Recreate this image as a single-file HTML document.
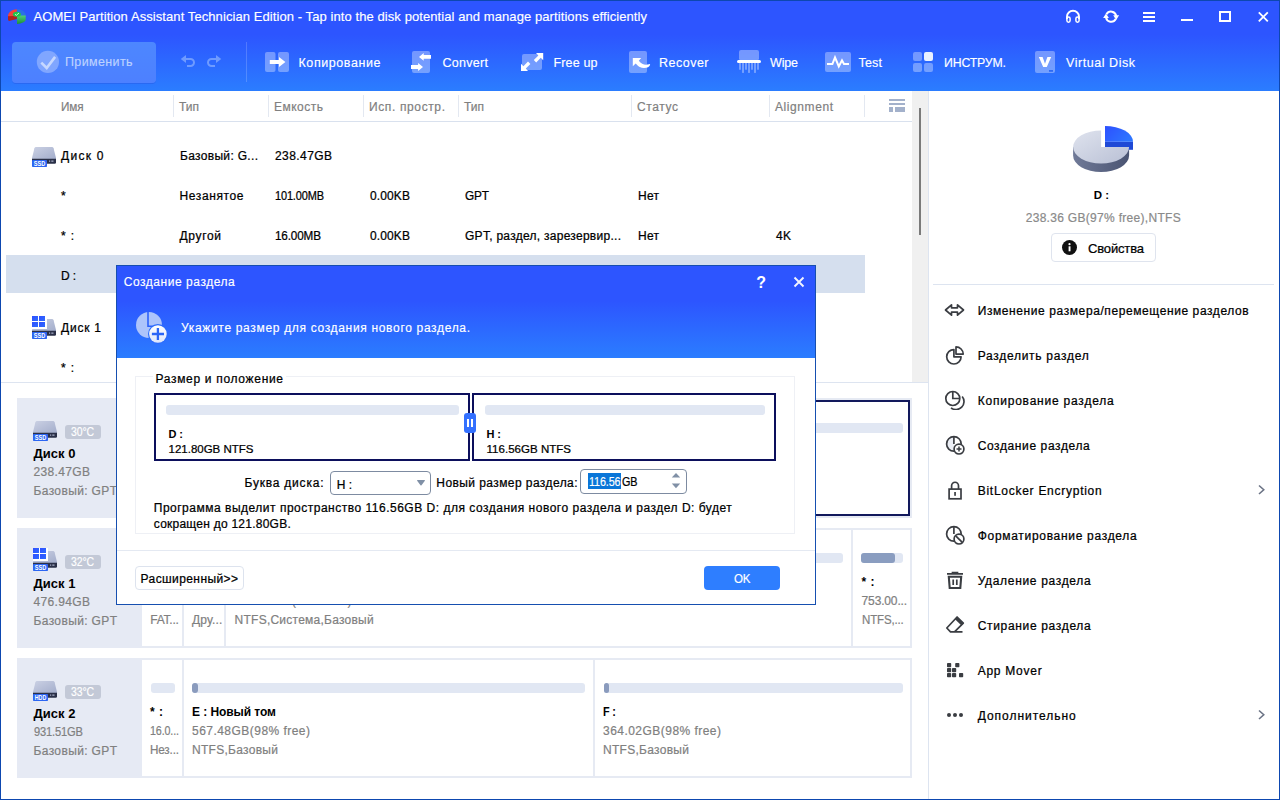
<!DOCTYPE html>
<html lang="ru"><head><meta charset="utf-8"><title>AOMEI Partition Assistant</title>
<style>
html,body{margin:0;padding:0}
body{width:1280px;height:800px;overflow:hidden;position:relative;background:#fff;font-family:"Liberation Sans",sans-serif;font-size:12px}
#app div,#app span,#app svg{position:absolute;box-sizing:border-box}
#app span{white-space:pre}
#app{position:absolute;left:0;top:0;width:1280px;height:800px;overflow:hidden}
</style></head><body><div id="app">
<div style="left:0px;top:0px;width:1280px;height:800px;background:#fff;"></div>
<div style="left:0px;top:0px;width:1280px;height:91px;background:linear-gradient(#2d55ff 0,#2d55ff 38%,#2b7dff 100%);"></div>
<svg style="left:6px;top:7px" width="22" height="19" viewBox="0 0 22 19">
<defs><linearGradient id="lg1" x1="0" y1="0" x2="0" y2="1"><stop offset="0" stop-color="#4fd07a"/><stop offset="1" stop-color="#1f8f3a"/></linearGradient></defs>
<path d="M10.800 2.200 C15.500 2 19.500 4.500 20 8.500 V10 L11 8.500 Z" fill="#2a72e4"/>
<path d="M2 8.600 L10.900 8.300 V11.900 L3 13.900 Q2 13.600 2 12.600 Z" fill="#b3231c"/>
<path d="M2 8.400 C2.500 4.700 6.500 2.500 10.800 2.200 V8.800 L2 9.300 Z" fill="#f2423c"/>
<path d="M11 8.400 L19.700 8.400 V12.600 C19.400 15.200 15.500 16.700 11 16.900 Z" fill="url(#lg1)"/>
<ellipse cx="10.900" cy="7.200" rx="4" ry="2.500" fill="#1dc64a"/>
<path d="M9 7.300 L10.400 8.300 L13 6" stroke="#d8ffe2" stroke-width="0.9" fill="none"/>
</svg>
<span style="left:33.50px;top:8.00px;font-size:13px;line-height:17px;color:#fff;-webkit-text-stroke:0.15px;letter-spacing:0.081px;">AOMEI Partition Assistant Technician Edition - Tap into the disk potential and manage partitions efficiently</span>
<svg style="left:1065px;top:9px" width="16" height="15" viewBox="0 0 16 15" fill="none" stroke="#fff" stroke-width="1.9">
<path d="M2 10 V7.500 a6 5.700 0 0 1 12 0 V10"/><rect x="1.900" y="8" width="3.200" height="5.200" rx="1.600" stroke-width="1.500"/><rect x="10.900" y="8" width="3.200" height="5.200" rx="1.600" stroke-width="1.500"/></svg>
<svg style="left:1102px;top:10px" width="18" height="14" viewBox="0 0 18 14" fill="none" stroke="#fff" stroke-width="2">
<path d="M4.500 4.300 A5.200 5.200 0 0 1 14.200 6"/><path d="M13.700 9.100 A5.200 5.200 0 0 1 4 7.400"/><path d="M11.200 5.300 H17.100 L14.200 10.100 Z" fill="#fff" stroke="none"/><path d="M1.100 8.100 H6.900 L4 3.500 Z" fill="#fff" stroke="none"/></svg>
<div style="left:1143px;top:12px;width:12.3px;height:2px;background:#fff;"></div>
<div style="left:1143px;top:16px;width:12.3px;height:2px;background:#fff;"></div>
<div style="left:1143px;top:20px;width:12.3px;height:2px;background:#fff;"></div>
<div style="left:1181px;top:19px;width:12px;height:2px;background:#fff;"></div>
<div style="left:1219px;top:11px;width:12px;height:11px;border:2px solid #fff;"></div>
<svg style="left:1257px;top:11px" width="12" height="12" viewBox="0 0 12 12" stroke="#fff" stroke-width="1.800"><path d="M1.800 1.300 L10.800 10.300 M10.800 1.300 L1.800 10.300"/></svg>
<div style="left:12px;top:42px;width:144px;height:40.5px;background:linear-gradient(#4d87ff,#4d80ff);border-radius:4px;box-shadow:0 1px 0 rgba(40,90,230,0.5);"></div>
<svg style="left:36px;top:50px" width="24" height="24" viewBox="0 0 24 24"><circle cx="11.900" cy="11.900" r="11.100" fill="#80a6ff"/><path d="M5.300 12.600 L10.700 18 L19.100 6.900" stroke="#c6d8ff" stroke-width="2.600" fill="none"/></svg>
<span style="left:65.00px;top:53.55px;font-size:12.5px;line-height:16.5px;color:#bdd2ff;-webkit-text-stroke:0.15px;letter-spacing:0.363px;">Применить</span>
<svg style="left:180px;top:54px" width="16" height="14" viewBox="0 0 16 14" fill="none" stroke="#6f9bff" stroke-width="2"><path d="M6 5 H10.500 A3.500 3.500 0 0 1 10.500 12 H7"/><path d="M6 1 L0.750 5 L6 9 Z" fill="#6f9bff" stroke="none"/></svg>
<svg style="left:206px;top:54px" width="16" height="14" viewBox="0 0 16 14" fill="none" stroke="#6f9bff" stroke-width="2"><path d="M10 5 H5.500 A3.500 3.500 0 0 0 5.500 12 H9"/><path d="M10 1 L15.250 5 L10 9 Z" fill="#6f9bff" stroke="none"/></svg>
<div style="left:246px;top:42px;width:1px;height:40px;background:rgba(255,255,255,0.18);"></div>
<svg style="left:265px;top:52px" width="24" height="20" viewBox="0 0 24 20"><rect x="0" y="0" width="10.500" height="20" rx="2" fill="rgba(255,255,255,0.34)"/><rect x="13" y="0" width="11" height="20" rx="2" fill="rgba(255,255,255,0.34)"/><path d="M4.800 8 H14 V5 L20.400 10 L14 15 V12 H4.800 Z" fill="#fff"/></svg>
<span style="left:298.50px;top:54.75px;font-size:12.5px;line-height:16.5px;color:#fff;-webkit-text-stroke:0.15px;letter-spacing:0.581px;">Копирование</span>
<svg style="left:411px;top:51px" width="21" height="22" viewBox="0 0 21 22"><rect x="1" y="0" width="18" height="22" rx="2" fill="rgba(255,255,255,0.34)"/><path d="M20 4 H12.700 V2 L8 5.900 L12.700 9.700 V7.700 H20 Z" fill="#fff"/><path d="M0 14.100 H7.100 V12 L12 16 L7.100 20 V17.900 H0 Z" fill="#fff"/></svg>
<span style="left:442.50px;top:54.75px;font-size:12.5px;line-height:16.5px;color:#fff;-webkit-text-stroke:0.15px;letter-spacing:0.286px;">Convert</span>
<svg style="left:520px;top:52px" width="24" height="20" viewBox="0 0 24 20"><rect x="2" y="2" width="20" height="16" rx="2" fill="rgba(255,255,255,0.34)"/><path d="M16 1 H23.200 V8.200 L20.800 5.800 L16.200 10.400 L13.800 8 L18.400 3.400 Z" fill="#fff"/><path d="M8 19 H1 V11.800 L3.400 14.200 L8 9.600 L10.400 12 L5.800 16.600 Z" fill="#fff"/></svg>
<span style="left:553.50px;top:54.75px;font-size:12.5px;line-height:16.5px;color:#fff;-webkit-text-stroke:0.15px;letter-spacing:0.151px;">Free up</span>
<svg style="left:629px;top:51px" width="24" height="22" viewBox="0 0 24 22"><rect x="0" y="0" width="18" height="22" rx="2" fill="rgba(255,255,255,0.34)"/><path d="M3.800 7 H12.200 L9.800 9.700 Q14 15 20 13.200 Q21.500 12.500 21 14 Q20 17 15 17 Q10.500 17 6.700 12.400 L3.800 15.200 Z" fill="#fff"/></svg>
<span style="left:659.00px;top:54.75px;font-size:12.5px;line-height:16.5px;color:#fff;-webkit-text-stroke:0.15px;letter-spacing:0.492px;">Recover</span>
<svg style="left:736px;top:50px" width="26" height="24" viewBox="0 0 26 24"><rect x="3" y="0" width="20" height="10.500" rx="2" fill="rgba(255,255,255,0.34)"/><rect x="1" y="10" width="24" height="3" rx="1.500" fill="#fff"/><g fill="rgba(255,255,255,0.34)"><rect x="3" y="13" width="2" height="6.700"/><rect x="6" y="13" width="2" height="9.900"/><rect x="9" y="13" width="2" height="6.700"/><rect x="12" y="13" width="2" height="9.900"/><rect x="15" y="13" width="2" height="6.700"/><rect x="18" y="13" width="2" height="9.900"/><rect x="21" y="13" width="2" height="6.700"/></g></svg>
<span style="left:770.00px;top:54.75px;font-size:12.5px;line-height:16.5px;color:#fff;-webkit-text-stroke:0.15px;letter-spacing:-0.161px;">Wipe</span>
<svg style="left:825px;top:52px" width="26" height="20" viewBox="0 0 26 20"><rect x="0" y="0" width="26" height="20" rx="2" fill="rgba(255,255,255,0.34)"/><path d="M2 12 H7.400 L10 5.400 L13.800 14.500 L17 8.400 L19 12 H24" stroke="#fff" stroke-width="2" fill="none"/></svg>
<span style="left:858.50px;top:54.75px;font-size:12.5px;line-height:16.5px;color:#fff;-webkit-text-stroke:0.15px;letter-spacing:0.188px;">Test</span>
<svg style="left:913px;top:52px" width="20" height="20" viewBox="0 0 20 20"><rect x="0" y="0" width="9" height="9" rx="2" fill="rgba(255,255,255,0.34)"/><rect x="11" y="0" width="9" height="9" rx="2" fill="#eaf1ff"/><rect x="0" y="11" width="9" height="9" rx="2" fill="rgba(255,255,255,0.34)"/><rect x="11" y="11" width="9" height="9" rx="2" fill="rgba(255,255,255,0.34)"/></svg>
<span style="left:943.50px;top:54.75px;font-size:12.5px;line-height:16.5px;color:#fff;-webkit-text-stroke:0.15px;letter-spacing:-0.150px;transform:scaleX(0.9825);transform-origin:0 50%;">ИНСТРУМ.</span>
<svg style="left:1035px;top:51px" width="20" height="22" viewBox="0 0 20 22"><rect x="0" y="0" width="20" height="22" rx="2" fill="rgba(255,255,255,0.34)"/><path d="M3.800 6 H7.600 L10 12.800 L12.400 6 H16.200 L11.800 16 H8.200 Z" fill="#fff"/><rect x="14" y="19" width="4" height="1.800" fill="#2d6af5"/></svg>
<span style="left:1066.00px;top:54.75px;font-size:12.5px;line-height:16.5px;color:#fff;-webkit-text-stroke:0.15px;letter-spacing:0.547px;">Virtual Disk</span>
<div style="left:912px;top:91px;width:17px;height:291px;background:#f0f0f0;"></div>
<div style="left:919px;top:108px;width:2px;height:127px;background:#7a7a7a;"></div>
<div style="left:1px;top:121px;width:911px;height:1px;background:#d9e1ee;"></div>
<div style="left:173px;top:95px;width:1px;height:22px;background:#e3e8f1;"></div>
<div style="left:268px;top:95px;width:1px;height:22px;background:#e3e8f1;"></div>
<div style="left:363px;top:95px;width:1px;height:22px;background:#e3e8f1;"></div>
<div style="left:458px;top:95px;width:1px;height:22px;background:#e3e8f1;"></div>
<div style="left:631px;top:95px;width:1px;height:22px;background:#e3e8f1;"></div>
<div style="left:769px;top:95px;width:1px;height:22px;background:#e3e8f1;"></div>
<div style="left:864px;top:95px;width:1px;height:22px;background:#e3e8f1;"></div>
<span style="left:61.00px;top:98.50px;font-size:12px;line-height:16px;color:#808080;-webkit-text-stroke:0.2px;letter-spacing:-0.150px;transform:scaleX(0.9751);transform-origin:0 50%;">Имя</span>
<span style="left:179.00px;top:98.50px;font-size:12px;line-height:16px;color:#808080;-webkit-text-stroke:0.2px;letter-spacing:-0.008px;">Тип</span>
<span style="left:274.00px;top:98.50px;font-size:12px;line-height:16px;color:#808080;-webkit-text-stroke:0.2px;letter-spacing:0.490px;">Емкость</span>
<span style="left:369.00px;top:98.50px;font-size:12px;line-height:16px;color:#808080;-webkit-text-stroke:0.2px;letter-spacing:0.624px;">Исп. простр.</span>
<span style="left:464.00px;top:98.50px;font-size:12px;line-height:16px;color:#808080;-webkit-text-stroke:0.2px;letter-spacing:-0.008px;">Тип</span>
<span style="left:637.00px;top:98.50px;font-size:12px;line-height:16px;color:#808080;-webkit-text-stroke:0.2px;letter-spacing:0.613px;">Статус</span>
<span style="left:775.00px;top:98.50px;font-size:12px;line-height:16px;color:#808080;-webkit-text-stroke:0.2px;letter-spacing:0.578px;">Alignment</span>
<div style="left:889px;top:99px;width:16px;height:2px;background:#a3b1cb;"></div>
<div style="left:889px;top:103px;width:16px;height:2px;background:#a3b1cb;"></div>
<div style="left:889px;top:107px;width:4px;height:5px;background:#a3b1cb;"></div>
<div style="left:895px;top:107px;width:10px;height:5px;background:#a3b1cb;"></div>
<div style="left:6px;top:255px;width:859px;height:38px;background:#d5dfee;"></div>
<svg style="left:32px;top:147px" width="24" height="20" viewBox="0 0 24 20"><defs><linearGradient id="dg1" x1="0" y1="0" x2="1" y2="1"><stop offset="0" stop-color="#cbd1e4"/><stop offset="1" stop-color="#a3adcb"/></linearGradient></defs><path d="M4 0 H20 Q21.200 0 21.600 1.200 L24 11 V12 H0 V11 L2.400 1.200 Q2.800 0 4 0 Z" fill="url(#dg1)"/><path d="M0 11.800 H24 V15.500 Q24 16.800 22.700 16.800 H0 Z" fill="#2a3048"/><rect x="17" y="13.600" width="1.200" height="1" fill="#c5cde6"/><rect x="19.300" y="13.600" width="2.200" height="1" fill="#c5cde6"/><rect x="0" y="13" width="15" height="7" rx="0.800" fill="#2c66f2"/><text x="7.500" y="19" font-family="Liberation Sans, sans-serif" font-size="6.800" font-weight="700" fill="#fff" text-anchor="middle" textLength="11.500" lengthAdjust="spacingAndGlyphs">SSD</text></svg>
<span style="left:61.00px;top:148.00px;font-size:12px;line-height:16px;color:#000;-webkit-text-stroke:0.24px;letter-spacing:1.281px;">Диск 0</span>
<span style="left:180.00px;top:148.00px;font-size:12px;line-height:16px;color:#000;-webkit-text-stroke:0.24px;letter-spacing:0.319px;">Базовый: G...</span>
<span style="left:275.00px;top:148.00px;font-size:12px;line-height:16px;color:#000;-webkit-text-stroke:0.24px;letter-spacing:0.422px;">238.47GB</span>
<span style="left:61.00px;top:188.00px;font-size:12px;line-height:16px;color:#000;-webkit-text-stroke:0.24px;">*</span>
<span style="left:179.50px;top:188.00px;font-size:12px;line-height:16px;color:#000;-webkit-text-stroke:0.24px;letter-spacing:0.613px;">Незанятое</span>
<span style="left:275.00px;top:188.00px;font-size:12px;line-height:16px;color:#000;-webkit-text-stroke:0.24px;letter-spacing:-0.150px;transform:scaleX(0.9133);transform-origin:0 50%;">101.00MB</span>
<span style="left:370.00px;top:188.00px;font-size:12px;line-height:16px;color:#000;-webkit-text-stroke:0.24px;letter-spacing:0.125px;">0.00KB</span>
<span style="left:465.00px;top:188.00px;font-size:12px;line-height:16px;color:#000;-webkit-text-stroke:0.24px;letter-spacing:-0.150px;transform:scaleX(0.9847);transform-origin:0 50%;">GPT</span>
<span style="left:638.00px;top:188.00px;font-size:12px;line-height:16px;color:#000;-webkit-text-stroke:0.24px;letter-spacing:0.281px;">Нет</span>
<span style="left:61.00px;top:228.00px;font-size:12px;line-height:16px;color:#000;-webkit-text-stroke:0.24px;letter-spacing:0.828px;">* :</span>
<span style="left:179.50px;top:228.00px;font-size:12px;line-height:16px;color:#000;-webkit-text-stroke:0.24px;letter-spacing:0.669px;">Другой</span>
<span style="left:275.00px;top:228.00px;font-size:12px;line-height:16px;color:#000;-webkit-text-stroke:0.24px;letter-spacing:-0.150px;transform:scaleX(0.9760);transform-origin:0 50%;">16.00MB</span>
<span style="left:370.00px;top:228.00px;font-size:12px;line-height:16px;color:#000;-webkit-text-stroke:0.24px;letter-spacing:0.125px;">0.00KB</span>
<span style="left:465.00px;top:228.00px;font-size:12px;line-height:16px;color:#000;-webkit-text-stroke:0.24px;letter-spacing:0.274px;">GPT, раздел, зарезервир...</span>
<span style="left:638.00px;top:228.00px;font-size:12px;line-height:16px;color:#000;-webkit-text-stroke:0.24px;letter-spacing:0.281px;">Нет</span>
<span style="left:776.00px;top:228.00px;font-size:12px;line-height:16px;color:#000;-webkit-text-stroke:0.24px;letter-spacing:0.312px;">4K</span>
<span style="left:61.00px;top:268.00px;font-size:12px;line-height:16px;color:#000;-webkit-text-stroke:0.24px;letter-spacing:-0.172px;">D :</span>
<svg style="left:32px;top:319px" width="24" height="20" viewBox="0 0 24 20"><defs><linearGradient id="dg2" x1="0" y1="0" x2="1" y2="1"><stop offset="0" stop-color="#cbd1e4"/><stop offset="1" stop-color="#a3adcb"/></linearGradient></defs><path d="M4 0 H20 Q21.200 0 21.600 1.200 L24 11 V12 H0 V11 L2.400 1.200 Q2.800 0 4 0 Z" fill="url(#dg2)"/><path d="M0 11.800 H24 V15.500 Q24 16.800 22.700 16.800 H0 Z" fill="#2a3048"/><rect x="17" y="13.600" width="1.200" height="1" fill="#c5cde6"/><rect x="19.300" y="13.600" width="2.200" height="1" fill="#c5cde6"/><rect x="0" y="13" width="15" height="7" rx="0.800" fill="#2c66f2"/><text x="7.500" y="19" font-family="Liberation Sans, sans-serif" font-size="6.800" font-weight="700" fill="#fff" text-anchor="middle" textLength="11.500" lengthAdjust="spacingAndGlyphs">SSD</text></svg>
<div style="left:32px;top:316px;width:14.5px;height:12.5px;background:#fff;"></div>
<div style="left:32px;top:316px;width:6px;height:5px;background:linear-gradient(135deg,#2f4fff,#2d6bff);"></div>
<div style="left:39px;top:316px;width:6px;height:5px;background:linear-gradient(135deg,#2f4fff,#2d6bff);"></div>
<div style="left:32px;top:322px;width:6px;height:5px;background:linear-gradient(135deg,#2f4fff,#2d6bff);"></div>
<div style="left:39px;top:322px;width:6px;height:5px;background:linear-gradient(135deg,#2f4fff,#2d6bff);"></div>
<span style="left:61.00px;top:320.00px;font-size:12px;line-height:16px;color:#000;-webkit-text-stroke:0.24px;letter-spacing:0.781px;">Диск 1</span>
<span style="left:61.00px;top:360.00px;font-size:12px;line-height:16px;color:#000;-webkit-text-stroke:0.24px;letter-spacing:0.828px;">* :</span>
<div style="left:1px;top:382px;width:928px;height:1px;background:#dde4f0;"></div>
<div style="left:928px;top:91px;width:1px;height:709px;background:#dde4f0;"></div>
<div style="left:17px;top:398px;width:895px;height:120px;background:#fff;border:2px solid #e6eaf3;"></div>
<div style="left:17px;top:398px;width:125px;height:120px;background:#e6eaf4;"></div>
<svg style="left:33px;top:421px" width="24" height="20" viewBox="0 0 24 20"><defs><linearGradient id="dg3" x1="0" y1="0" x2="1" y2="1"><stop offset="0" stop-color="#cbd1e4"/><stop offset="1" stop-color="#a3adcb"/></linearGradient></defs><path d="M4 0 H20 Q21.200 0 21.600 1.200 L24 11 V12 H0 V11 L2.400 1.200 Q2.800 0 4 0 Z" fill="url(#dg3)"/><path d="M0 11.800 H24 V15.500 Q24 16.800 22.700 16.800 H0 Z" fill="#2a3048"/><rect x="17" y="13.600" width="1.200" height="1" fill="#c5cde6"/><rect x="19.300" y="13.600" width="2.200" height="1" fill="#c5cde6"/><rect x="0" y="13" width="15" height="7" rx="0.800" fill="#2c66f2"/><text x="7.500" y="19" font-family="Liberation Sans, sans-serif" font-size="6.800" font-weight="700" fill="#fff" text-anchor="middle" textLength="11.500" lengthAdjust="spacingAndGlyphs">SSD</text></svg>
<div style="left:65px;top:424.5px;width:36px;height:14px;background:#c3c9d7;border-radius:3px;"></div>
<span style="left:71.00px;top:424.00px;font-size:12px;line-height:16px;color:#fff;-webkit-text-stroke:0.15px;letter-spacing:-0.150px;transform:scaleX(0.8725);transform-origin:0 50%;">30°C</span>
<span style="left:33.50px;top:444.50px;font-size:13px;line-height:17px;color:#000;font-weight:700;letter-spacing:0.031px;">Диск 0</span>
<span style="left:33.50px;top:463.50px;font-size:12px;line-height:16px;color:#808080;-webkit-text-stroke:0.2px;letter-spacing:0.350px;">238.47GB</span>
<span style="left:33.50px;top:482.50px;font-size:12px;line-height:16px;color:#808080;-webkit-text-stroke:0.2px;letter-spacing:0.364px;">Базовый: GPT</span>
<div style="left:142px;top:400px;width:768px;height:116px;border:2px solid #12195c;background:#fff;"></div>
<div style="left:150px;top:423px;width:753px;height:10px;background:#e1e7f3;border-radius:3px;"></div>
<div style="left:17px;top:528px;width:895px;height:120px;background:#fff;border:2px solid #e6eaf3;"></div>
<div style="left:17px;top:528px;width:125px;height:120px;background:#e6eaf4;"></div>
<svg style="left:33px;top:551px" width="24" height="20" viewBox="0 0 24 20"><defs><linearGradient id="dg4" x1="0" y1="0" x2="1" y2="1"><stop offset="0" stop-color="#cbd1e4"/><stop offset="1" stop-color="#a3adcb"/></linearGradient></defs><path d="M4 0 H20 Q21.200 0 21.600 1.200 L24 11 V12 H0 V11 L2.400 1.200 Q2.800 0 4 0 Z" fill="url(#dg4)"/><path d="M0 11.800 H24 V15.500 Q24 16.800 22.700 16.800 H0 Z" fill="#2a3048"/><rect x="17" y="13.600" width="1.200" height="1" fill="#c5cde6"/><rect x="19.300" y="13.600" width="2.200" height="1" fill="#c5cde6"/><rect x="0" y="13" width="15" height="7" rx="0.800" fill="#2c66f2"/><text x="7.500" y="19" font-family="Liberation Sans, sans-serif" font-size="6.800" font-weight="700" fill="#fff" text-anchor="middle" textLength="11.500" lengthAdjust="spacingAndGlyphs">SSD</text></svg>
<div style="left:33px;top:548px;width:14.5px;height:12.5px;background:#fff;"></div>
<div style="left:33px;top:548px;width:6px;height:5px;background:linear-gradient(135deg,#2f4fff,#2d6bff);"></div>
<div style="left:40px;top:548px;width:6px;height:5px;background:linear-gradient(135deg,#2f4fff,#2d6bff);"></div>
<div style="left:33px;top:554px;width:6px;height:5px;background:linear-gradient(135deg,#2f4fff,#2d6bff);"></div>
<div style="left:40px;top:554px;width:6px;height:5px;background:linear-gradient(135deg,#2f4fff,#2d6bff);"></div>
<div style="left:65px;top:554.5px;width:36px;height:14px;background:#c3c9d7;border-radius:3px;"></div>
<span style="left:71.00px;top:554.00px;font-size:12px;line-height:16px;color:#fff;-webkit-text-stroke:0.15px;letter-spacing:-0.150px;transform:scaleX(0.8725);transform-origin:0 50%;">32°C</span>
<span style="left:33.50px;top:574.50px;font-size:13px;line-height:17px;color:#000;font-weight:700;letter-spacing:0.031px;">Диск 1</span>
<span style="left:33.50px;top:593.50px;font-size:12px;line-height:16px;color:#808080;-webkit-text-stroke:0.2px;letter-spacing:0.350px;">476.94GB</span>
<span style="left:33.50px;top:612.50px;font-size:12px;line-height:16px;color:#808080;-webkit-text-stroke:0.2px;letter-spacing:0.364px;">Базовый: GPT</span>
<div style="left:182px;top:530px;width:2px;height:116px;background:#e6eaf3;"></div>
<div style="left:224px;top:530px;width:2px;height:116px;background:#e6eaf3;"></div>
<div style="left:851px;top:530px;width:2px;height:116px;background:#e6eaf3;"></div>
<span style="left:150.30px;top:612.00px;font-size:12px;line-height:16px;color:#808080;-webkit-text-stroke:0.2px;letter-spacing:-0.259px;">FAT...</span>
<span style="left:192.00px;top:612.00px;font-size:12px;line-height:16px;color:#808080;-webkit-text-stroke:0.2px;letter-spacing:0.186px;">Дру...</span>
<span style="left:234.60px;top:612.00px;font-size:12px;line-height:16px;color:#808080;-webkit-text-stroke:0.2px;letter-spacing:0.238px;">NTFS,Система,Базовый</span>
<span style="left:234.60px;top:573.00px;font-size:12px;line-height:16px;color:#000;font-weight:700;letter-spacing:-0.150px;transform:scaleX(0.8917);transform-origin:0 50%;">C :</span>
<span style="left:234.60px;top:593.00px;font-size:12px;line-height:16px;color:#808080;-webkit-text-stroke:0.2px;letter-spacing:0.408px;">475.68GB(72% free)</span>
<div style="left:150px;top:553px;width:24px;height:10px;background:#e1e7f3;border-radius:3px;"></div>
<div style="left:192px;top:553px;width:24px;height:10px;background:#e1e7f3;border-radius:3px;"></div>
<div style="left:234px;top:553px;width:609px;height:10px;background:#e1e7f3;border-radius:3px;"></div>
<div style="left:861px;top:553px;width:41.5px;height:10px;background:#e1e7f3;border-radius:3px;"></div>
<div style="left:861px;top:553px;width:33.7px;height:10px;background:#8a9dc0;border-radius:3px;"></div>
<span style="left:861.50px;top:573.50px;font-size:12px;line-height:16px;color:#000;font-weight:700;letter-spacing:0.500px;">* :</span>
<span style="left:861.60px;top:593.00px;font-size:12px;line-height:16px;color:#808080;-webkit-text-stroke:0.2px;letter-spacing:-0.152px;">753.00...</span>
<span style="left:861.60px;top:612.00px;font-size:12px;line-height:16px;color:#808080;-webkit-text-stroke:0.2px;letter-spacing:-0.150px;transform:scaleX(0.9582);transform-origin:0 50%;">NTFS,...</span>
<div style="left:17px;top:658px;width:895px;height:120px;background:#fff;border:2px solid #e6eaf3;"></div>
<div style="left:17px;top:658px;width:125px;height:120px;background:#e6eaf4;"></div>
<svg style="left:33px;top:681px" width="24" height="20" viewBox="0 0 24 20"><defs><linearGradient id="dg5" x1="0" y1="0" x2="1" y2="1"><stop offset="0" stop-color="#cbd1e4"/><stop offset="1" stop-color="#a3adcb"/></linearGradient></defs><path d="M4 0 H20 Q21.200 0 21.600 1.200 L24 11 V12 H0 V11 L2.400 1.200 Q2.800 0 4 0 Z" fill="url(#dg5)"/><path d="M0 11.800 H24 V15.500 Q24 16.800 22.700 16.800 H0 Z" fill="#2a3048"/><rect x="17" y="13.600" width="1.200" height="1" fill="#c5cde6"/><rect x="19.300" y="13.600" width="2.200" height="1" fill="#c5cde6"/><rect x="0" y="13" width="15" height="7" rx="0.800" fill="#2c66f2"/><text x="7.500" y="19" font-family="Liberation Sans, sans-serif" font-size="6.800" font-weight="700" fill="#fff" text-anchor="middle" textLength="11.500" lengthAdjust="spacingAndGlyphs">HDD</text></svg>
<div style="left:65px;top:684.5px;width:36px;height:14px;background:#c3c9d7;border-radius:3px;"></div>
<span style="left:71.00px;top:684.00px;font-size:12px;line-height:16px;color:#fff;-webkit-text-stroke:0.15px;letter-spacing:-0.150px;transform:scaleX(0.8725);transform-origin:0 50%;">33°C</span>
<span style="left:33.50px;top:704.50px;font-size:13px;line-height:17px;color:#000;font-weight:700;letter-spacing:0.031px;">Диск 2</span>
<span style="left:33.50px;top:723.50px;font-size:12px;line-height:16px;color:#808080;-webkit-text-stroke:0.2px;letter-spacing:-0.150px;transform:scaleX(0.9246);transform-origin:0 50%;">931.51GB</span>
<span style="left:33.50px;top:742.50px;font-size:12px;line-height:16px;color:#808080;-webkit-text-stroke:0.2px;letter-spacing:0.364px;">Базовый: GPT</span>
<div style="left:182px;top:660px;width:2px;height:116px;background:#e6eaf3;"></div>
<div style="left:593px;top:660px;width:2px;height:116px;background:#e6eaf3;"></div>
<div style="left:150.5px;top:683px;width:24px;height:10px;background:#e1e7f3;border-radius:3px;"></div>
<div style="left:192px;top:683px;width:393px;height:10px;background:#e1e7f3;border-radius:3px;"></div>
<div style="left:192px;top:683px;width:6px;height:10px;background:#8a9bbd;border-radius:3px;"></div>
<div style="left:604px;top:683px;width:299px;height:10px;background:#e1e7f3;border-radius:3px;"></div>
<div style="left:604px;top:683px;width:5px;height:10px;background:#8a9bbd;border-radius:3px;"></div>
<span style="left:150.00px;top:704.00px;font-size:12px;line-height:16px;color:#000;font-weight:700;letter-spacing:0.500px;">* :</span>
<span style="left:150.00px;top:723.00px;font-size:12px;line-height:16px;color:#808080;-webkit-text-stroke:0.2px;letter-spacing:-0.150px;transform:scaleX(0.8934);transform-origin:0 50%;">16.0...</span>
<span style="left:150.00px;top:742.00px;font-size:12px;line-height:16px;color:#808080;-webkit-text-stroke:0.2px;letter-spacing:-0.150px;transform:scaleX(0.9717);transform-origin:0 50%;">Нез...</span>
<span style="left:192.00px;top:704.00px;font-size:12px;line-height:16px;color:#000;font-weight:700;letter-spacing:-0.065px;">E : Новый том</span>
<span style="left:192.00px;top:723.00px;font-size:12px;line-height:16px;color:#808080;-webkit-text-stroke:0.2px;letter-spacing:0.467px;">567.48GB(98% free)</span>
<span style="left:192.00px;top:742.00px;font-size:12px;line-height:16px;color:#808080;-webkit-text-stroke:0.2px;letter-spacing:0.288px;">NTFS,Базовый</span>
<span style="left:603.00px;top:704.00px;font-size:12px;line-height:16px;color:#000;font-weight:700;letter-spacing:-0.150px;transform:scaleX(0.9045);transform-origin:0 50%;">F :</span>
<span style="left:603.00px;top:723.00px;font-size:12px;line-height:16px;color:#808080;-webkit-text-stroke:0.2px;letter-spacing:0.467px;">364.02GB(98% free)</span>
<span style="left:603.00px;top:742.00px;font-size:12px;line-height:16px;color:#808080;-webkit-text-stroke:0.2px;letter-spacing:0.288px;">NTFS,Базовый</span>
<svg style="left:1070px;top:123px" width="66" height="52" viewBox="0 0 66 52">
<defs><linearGradient id="pg1" x1="0" y1="0" x2="1" y2="1"><stop offset="0" stop-color="#dfe3ee"/><stop offset="1" stop-color="#b9c0d5"/></linearGradient>
<linearGradient id="pg2" x1="0" y1="0" x2="1" y2="0"><stop offset="0" stop-color="#707a98"/><stop offset="1" stop-color="#4a5472"/></linearGradient>
<linearGradient id="pg3" x1="0" y1="0" x2="1" y2="0.500"><stop offset="0" stop-color="#2d50ff"/><stop offset="1" stop-color="#2d74ff"/></linearGradient></defs>
<path d="M3.100 24 V32.500 A28 16.500 0 0 0 59.100 32.500 V24 Z" fill="url(#pg2)"/>
<path d="M35 18.700 H63 V26.800 H35 Z" fill="#1f49d6"/>
<path d="M35 3 A28 15.700 0 0 1 63 18.700 H35 Z" fill="url(#pg3)"/>
<path d="M31.100 7.500 A28 16.500 0 1 0 59.100 24 H31.100 Z" fill="url(#pg1)"/>
</svg>
<span style="left:1093.75px;top:188.25px;font-size:11.5px;line-height:15.5px;color:#000;font-weight:700;letter-spacing:-0.022px;">D :</span>
<span style="left:1025.70px;top:209.60px;font-size:12px;line-height:16px;color:#8a8a8a;-webkit-text-stroke:0.2px;letter-spacing:0.302px;">238.36 GB(97% free),NTFS</span>
<div style="left:1051px;top:233px;width:105px;height:29px;border:1px solid #dfe4ee;border-radius:4px;background:#fff;"></div>
<svg style="left:1062px;top:240px" width="15" height="15" viewBox="0 0 15 15"><circle cx="7.500" cy="7.500" r="7.500" fill="#111"/><rect x="6.600" y="6.300" width="1.900" height="5" fill="#fff"/><circle cx="7.500" cy="4.200" r="1.100" fill="#fff"/></svg>
<span style="left:1088.00px;top:240.00px;font-size:13px;line-height:17px;color:#000;-webkit-text-stroke:0.24px;letter-spacing:-0.156px;">Свойства</span>
<div style="left:933px;top:284px;width:341px;height:1px;background:#dde4f0;"></div>
<span style="left:977.70px;top:302.60px;font-size:12px;line-height:16px;color:#000;-webkit-text-stroke:0.24px;letter-spacing:0.591px;">Изменение размера/перемещение разделов</span>
<span style="left:977.70px;top:347.60px;font-size:12px;line-height:16px;color:#000;-webkit-text-stroke:0.24px;letter-spacing:0.721px;">Разделить раздел</span>
<span style="left:977.70px;top:392.60px;font-size:12px;line-height:16px;color:#000;-webkit-text-stroke:0.24px;letter-spacing:0.785px;">Копирование раздела</span>
<span style="left:977.70px;top:437.60px;font-size:12px;line-height:16px;color:#000;-webkit-text-stroke:0.24px;letter-spacing:0.608px;">Создание раздела</span>
<span style="left:977.70px;top:482.60px;font-size:12px;line-height:16px;color:#000;-webkit-text-stroke:0.24px;letter-spacing:0.734px;">BitLocker Encryption</span>
<span style="left:977.70px;top:527.60px;font-size:12px;line-height:16px;color:#000;-webkit-text-stroke:0.24px;letter-spacing:0.698px;">Форматирование раздела</span>
<span style="left:977.70px;top:572.60px;font-size:12px;line-height:16px;color:#000;-webkit-text-stroke:0.24px;letter-spacing:0.681px;">Удаление раздела</span>
<span style="left:977.70px;top:617.60px;font-size:12px;line-height:16px;color:#000;-webkit-text-stroke:0.24px;letter-spacing:0.669px;">Стирание раздела</span>
<span style="left:977.70px;top:662.60px;font-size:12px;line-height:16px;color:#000;-webkit-text-stroke:0.24px;letter-spacing:0.746px;">App Mover</span>
<span style="left:977.70px;top:707.60px;font-size:12px;line-height:16px;color:#000;-webkit-text-stroke:0.24px;letter-spacing:0.969px;">Дополнительно</span>
<svg style="left:1256px;top:484px" width="10" height="12" viewBox="0 0 10 12" fill="none" stroke="#6b7385" stroke-width="1.600"><path d="M3 1.500 L7.750 5.750 L3 10"/></svg>
<svg style="left:1256px;top:709px" width="10" height="12" viewBox="0 0 10 12" fill="none" stroke="#6b7385" stroke-width="1.600"><path d="M3 1.500 L7.750 5.750 L3 10"/></svg>
<svg style="left:944px;top:300px" width="22" height="20" viewBox="0 0 22 20" fill="none" stroke="#3a3d42" stroke-width="1.700"><path d="M1.500 10 L7.500 4.800 V7.800 H13.500 V4.800 L19.500 10 L13.500 15.200 V12.200 H7.500 V15.200 Z" stroke-linejoin="round"/></svg>
<svg style="left:944px;top:345px" width="22" height="20" viewBox="0 0 22 20" fill="none" stroke="#3a3d42" stroke-width="1.700"><path d="M9.900 4.600 A7.200 7.200 0 1 0 17.100 11.800 H9.900 Z" stroke-linejoin="round"/><path d="M12 1.900 A7.200 7.200 0 0 1 19.200 9.100 H12 Z" stroke-linejoin="round"/></svg>
<svg style="left:944px;top:390px" width="22" height="20" viewBox="0 0 22 20" fill="none" stroke="#3a3d42" stroke-width="1.700"><circle cx="8.800" cy="8.500" r="7"/><path d="M8.800 1.500 V8.500 H15.800"/><path d="M18.200 6.500 A8 8 0 0 1 7 17.800"/></svg>
<svg style="left:944px;top:435px" width="22" height="20" viewBox="0 0 22 20" fill="none" stroke="#3a3d42" stroke-width="1.700"><path d="M9.900 0.900 A7.300 7.300 0 0 0 9.900 15.500 Z" fill="#eceff6" stroke="none"/><circle cx="9.900" cy="8.900" r="7.300"/><path d="M9.900 1.600 V8.900"/><circle cx="15" cy="14.100" r="4.900" fill="#fff"/><path d="M15 11.600 V16.600 M12.500 14.100 H17.500" stroke-width="1.500"/></svg>
<svg style="left:944px;top:480px" width="22" height="20" viewBox="0 0 22 20" fill="none" stroke="#3a3d42" stroke-width="1.700"><rect x="5.100" y="9.100" width="11.900" height="9.700"/><path d="M7.600 9 V5.700 a3.450 3.450 0 0 1 6.900 0 V9"/><rect x="10.200" y="12" width="1.700" height="3.800" fill="#3a3d42" stroke="none"/></svg>
<svg style="left:944px;top:525px" width="22" height="20" viewBox="0 0 22 20" fill="none" stroke="#3a3d42" stroke-width="1.700"><circle cx="9.900" cy="8.900" r="7.300"/><path d="M9.900 1.600 V8.900"/><circle cx="15" cy="14.100" r="4.900" fill="#fff"/><path d="M11.700 10.800 L18.300 17.400"/></svg>
<svg style="left:944px;top:570px" width="22" height="20" viewBox="0 0 22 20" fill="none" stroke="#3a3d42" stroke-width="1.700"><path d="M3 3.900 H19 M8.500 3.700 V2.500 H13.500 V3.700" /><path d="M4.800 6.800 H17.200 L16.300 18 H5.700 Z" stroke-width="2.100"/><path d="M9.200 9.500 V15 M12.800 9.500 V15"/></svg>
<svg style="left:944px;top:615px" width="22" height="20" viewBox="0 0 22 20" fill="none" stroke="#3a3d42" stroke-width="1.700"><path d="M13.100 2 L19.300 8.100 L10.500 16.800 H6.500 L2.800 13 Z M10 16.800 H18.500" stroke-linejoin="round"/><path d="M11.800 2.800 L18.500 9.300" stroke-width="3"/></svg>
<svg style="left:944px;top:660px" width="22" height="20" viewBox="0 0 22 20" fill="none" stroke="#3a3d42" stroke-width="1.700"><g fill="#3a3d42" stroke="none"><rect x="3" y="3" width="4.200" height="4.200" rx="0.800"/><rect x="11.200" y="3" width="4.200" height="4.200" rx="0.800"/><rect x="3" y="8" width="4.200" height="4.200" rx="0.800"/><rect x="8" y="8" width="4.200" height="4.200" rx="0.800"/><rect x="3" y="13" width="4.200" height="4.200" rx="0.800"/><rect x="8" y="13" width="4.200" height="4.200" rx="0.800"/><rect x="15" y="13" width="4.200" height="4.200" rx="0.800"/></g></svg>
<svg style="left:944px;top:705px" width="22" height="20" viewBox="0 0 22 20" fill="none" stroke="#3a3d42" stroke-width="1.700"><g fill="#3a3d42" stroke="none"><circle cx="5" cy="10" r="2"/><circle cx="11" cy="10" r="2"/><circle cx="17" cy="10" r="2"/></g></svg>
<div style="left:116px;top:265px;width:700px;height:340px;background:#fff;border:1px solid #164fb0;"></div>
<div style="left:117px;top:266px;width:698px;height:91.5px;background:linear-gradient(#2d55ff 0,#2d55ff 38%,#2b7dff 100%);"></div>
<span style="left:123.75px;top:274.00px;font-size:12px;line-height:16px;color:#fff;-webkit-text-stroke:0.15px;letter-spacing:0.542px;">Создание раздела</span>
<span style="left:756.30px;top:273.00px;font-size:16px;line-height:20px;color:#fff;font-weight:700;">?</span>
<svg style="left:793px;top:276px" width="12" height="12" viewBox="0 0 12 12" stroke="#f2f4ff" stroke-width="1.900"><path d="M1.500 1.500 L10.500 10.500 M10.500 1.500 L1.500 10.500"/></svg>
<svg style="left:135px;top:311px" width="34" height="34" viewBox="0 0 34 34">
<defs><linearGradient id="dlg1" x1="0" y1="0" x2="0" y2="1"><stop offset="0" stop-color="#ffffff"/><stop offset="1" stop-color="#dce6fb"/></linearGradient></defs>
<circle cx="14" cy="14" r="13" fill="#adc4fb"/>
<path d="M13 0.800 V15.200 H22" stroke="#2d62fb" stroke-width="1.600" fill="none"/>
<circle cx="22.900" cy="23" r="9.900" fill="#2c6cfc"/>
<circle cx="22.900" cy="23" r="8.800" fill="url(#dlg1)"/>
<path d="M22.900 17.100 V29 M16.900 23 H29" stroke="#2b66f6" stroke-width="2.300"/></svg>
<span style="left:181.00px;top:320.00px;font-size:12px;line-height:16px;color:#fff;-webkit-text-stroke:0.15px;letter-spacing:0.674px;">Укажите размер для создания нового раздела.</span>
<div style="left:135px;top:376px;width:660px;height:158px;border:1px solid #eef0f5;"></div>
<div style="left:153px;top:370px;width:133px;height:16px;background:#fff;"></div>
<span style="left:155.50px;top:371.00px;font-size:12px;line-height:16px;color:#000;-webkit-text-stroke:0.24px;letter-spacing:0.682px;">Размер и положение</span>
<div style="left:154px;top:393px;width:316px;height:68px;border:2px solid #0c0f5c;background:#fff;"></div>
<div style="left:472px;top:393px;width:304px;height:68px;border:2px solid #0c0f5c;background:#fff;"></div>
<div style="left:166px;top:405px;width:292.5px;height:10px;background:#e1e7f3;border-radius:3px;"></div>
<div style="left:484.5px;top:405px;width:280.5px;height:10px;background:#e1e7f3;border-radius:3px;"></div>
<span style="left:168.50px;top:426.50px;font-size:11px;line-height:15px;color:#000;font-weight:700;letter-spacing:-0.086px;">D :</span>
<span style="left:168.50px;top:442.25px;font-size:11.5px;line-height:15.5px;color:#000;-webkit-text-stroke:0.24px;">121.80GB NTFS</span>
<span style="left:486.50px;top:426.50px;font-size:11px;line-height:15px;color:#000;font-weight:700;letter-spacing:-0.086px;">H :</span>
<span style="left:486.50px;top:442.25px;font-size:11.5px;line-height:15.5px;color:#000;-webkit-text-stroke:0.24px;letter-spacing:0.029px;">116.56GB NTFS</span>
<div style="left:464px;top:413px;width:12px;height:20px;background:#3370ff;border-radius:3px;"></div>
<div style="left:466.8px;top:419px;width:2.3px;height:8px;background:#fff;"></div>
<div style="left:470.6px;top:419px;width:2.3px;height:8px;background:#fff;"></div>
<span style="left:244.50px;top:475.00px;font-size:12px;line-height:16px;color:#000;-webkit-text-stroke:0.24px;letter-spacing:0.787px;">Буква диска:</span>
<div style="left:330px;top:471px;width:101px;height:24px;border:1px solid #7d8ba1;border-radius:4px;background:#fff;"></div>
<span style="left:336.70px;top:476.50px;font-size:12px;line-height:16px;color:#000;-webkit-text-stroke:0.24px;letter-spacing:0.078px;">H :</span>
<svg style="left:417px;top:480px" width="8" height="6" viewBox="0 0 8 6"><path d="M0.500 0 H7.500 Q8.300 0.200 7.700 1 L4.500 5.300 Q4 5.800 3.500 5.300 L0.300 1 Q-0.300 0.200 0.500 0 Z" fill="#8090a6"/></svg>
<span style="left:436.30px;top:475.00px;font-size:12px;line-height:16px;color:#000;-webkit-text-stroke:0.24px;letter-spacing:0.422px;">Новый размер раздела:</span>
<div style="left:580px;top:469px;width:107px;height:25px;border:1px solid #7d8ba1;border-radius:4px;background:#fff;"></div>
<div style="left:588px;top:473px;width:33px;height:16px;background:#0a76d8;"></div>
<span style="left:588.50px;top:474.00px;font-size:12px;line-height:16px;color:#fff;-webkit-text-stroke:0.15px;letter-spacing:-0.150px;transform:scaleX(0.8984);transform-origin:0 50%;">116.56</span>
<span style="left:621.50px;top:474.00px;font-size:12px;line-height:16px;color:#000;-webkit-text-stroke:0.24px;letter-spacing:-0.150px;transform:scaleX(0.9015);transform-origin:0 50%;">GB</span>
<svg style="left:671px;top:473px" width="10" height="16" viewBox="0 0 10 16"><path d="M0.800 4.600 L5 0 L9.200 4.600 Z" fill="#8090a6"/><path d="M0.800 10.400 H9.200 L5 15.200 Z" fill="#8090a6"/></svg>
<span style="left:153.75px;top:500.00px;font-size:12px;line-height:16px;color:#000;-webkit-text-stroke:0.24px;letter-spacing:0.506px;">Программа выделит пространство 116.56GB D: для создания нового раздела и раздел D: будет</span>
<span style="left:153.75px;top:516.00px;font-size:12px;line-height:16px;color:#000;-webkit-text-stroke:0.24px;letter-spacing:0.241px;">сокращен до 121.80GB.</span>
<div style="left:117px;top:550px;width:698px;height:1px;background:#e4e9f2;"></div>
<div style="left:135px;top:566px;width:109px;height:24px;border:1px solid #dde3ee;border-radius:4px;background:#fff;"></div>
<span style="left:140.60px;top:571.00px;font-size:12px;line-height:16px;color:#000;-webkit-text-stroke:0.24px;letter-spacing:0.403px;">Расширенный&gt;&gt;</span>
<div style="left:704px;top:566px;width:76px;height:24px;background:#2e7eff;border-radius:4px;"></div>
<span style="left:733.75px;top:571.00px;font-size:12px;line-height:16px;color:#fff;-webkit-text-stroke:0.15px;letter-spacing:-0.150px;transform:scaleX(0.9597);transform-origin:0 50%;">OK</span>
<div style="left:0px;top:0px;width:1280px;height:800px;border:1px solid #0d47b0;"></div>
</div></body></html>
